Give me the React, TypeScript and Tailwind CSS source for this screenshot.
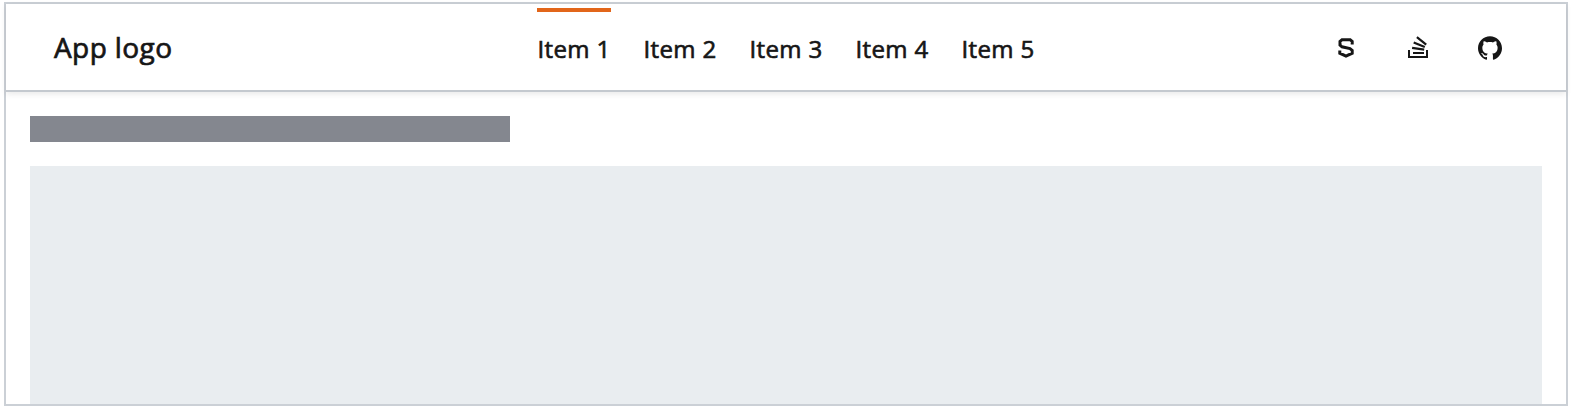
const items = ['Item 1', 'Item 2', 'Item 3', 'Item 4', 'Item 5'];

function ShieldIcon() {
  return (
    <svg viewBox="0 0 24 24" className="size-6" fill="none" stroke="currentColor" strokeWidth="3">
      <path d="M18.2 8.4V5.4L16.2 3.8H8L6 5.4V9L8 10.8L16 12.6L18.2 14.4V17.2L12 20.2L5.8 17.2V14.4" />
    </svg>
  );
}

function StackIcon() {
  return (
    <svg viewBox="0 0 24 24" className="size-6" fill="none" stroke="currentColor" strokeWidth="2">
      <path d="M3 14V21H21V14M7 17H18" />
      <path strokeWidth="2.2" d="M6.1 11.8L18.2 13.7M7.7 6.4L18.8 11M10.9 1.2L20.2 8.7" />
    </svg>
  );
}

function GithubIcon() {
  return (
    <svg viewBox="0 0 24 24" className="size-6" fill="currentColor">
      <path d="M12 .297c-6.63 0-12 5.373-12 12 0 5.303 3.438 9.8 8.205 11.385.6.113.82-.258.82-.577 0-.285-.01-1.04-.015-2.04-3.338.724-4.042-1.61-4.042-1.61C4.422 18.07 3.633 17.7 3.633 17.7c-1.087-.744.084-.729.084-.729 1.205.084 1.838 1.236 1.838 1.236 1.07 1.835 2.809 1.305 3.495.998.108-.776.417-1.305.76-1.605-2.665-.3-5.466-1.332-5.466-5.93 0-1.31.465-2.38 1.235-3.22-.135-.303-.54-1.523.105-3.176 0 0 1.005-.322 3.3 1.23.96-.267 1.98-.399 3-.405 1.02.006 2.04.138 3 .405 2.28-1.552 3.285-1.23 3.285-1.23.645 1.653.24 2.873.12 3.176.765.84 1.23 1.91 1.23 3.22 0 4.61-2.805 5.625-5.475 5.92.42.36.81 1.096.81 2.22 0 1.606-.015 2.896-.015 3.286 0 .315.21.69.825.57C20.565 22.092 24 17.592 24 12.297c0-6.627-5.373-12-12-12" />
    </svg>
  );
}

export default function App() {
  return (
    <div className="h-[406px] bg-white pt-0.5 pr-1 pl-1 font-['Open_Sans','Noto_Sans',sans-serif] text-[#161616]">
      <div className="flex h-[404px] flex-col border-2 border-[#cbd0d6]">
        <header className="flex h-[88px] shrink-0 border-b-2 border-[#c4c9cf] pr-16 pl-12 shadow-[0_2px_6px_rgba(0,0,0,0.09)]">
          <div className="flex w-[483px] items-center text-[28px] leading-9 tracking-[0.4px] [-webkit-text-stroke:0.7px_currentColor]">
            App logo
          </div>
          <nav className="flex gap-8 pt-1">
            {items.map((item, index) => (
              <a
                key={item}
                className={`flex w-[74px] items-center justify-center border-t-4 pb-1 text-2xl tracking-[0.35px] whitespace-nowrap [-webkit-text-stroke:0.65px_currentColor] ${index === 0 ? 'border-[#e2661a]' : 'border-transparent'}`}
              >
                {item}
              </a>
            ))}
          </nav>
          <div className="ml-auto flex items-center gap-12 pt-0.5">
            <ShieldIcon />
            <StackIcon />
            <GithubIcon />
          </div>
        </header>
        <main className="flex grow flex-col gap-6 px-6 pt-6">
          <div className="h-[26px] w-[480px] bg-[#84878f]" />
          <div className="grow bg-[#e9edf0]" />
        </main>
      </div>
    </div>
  );
}
